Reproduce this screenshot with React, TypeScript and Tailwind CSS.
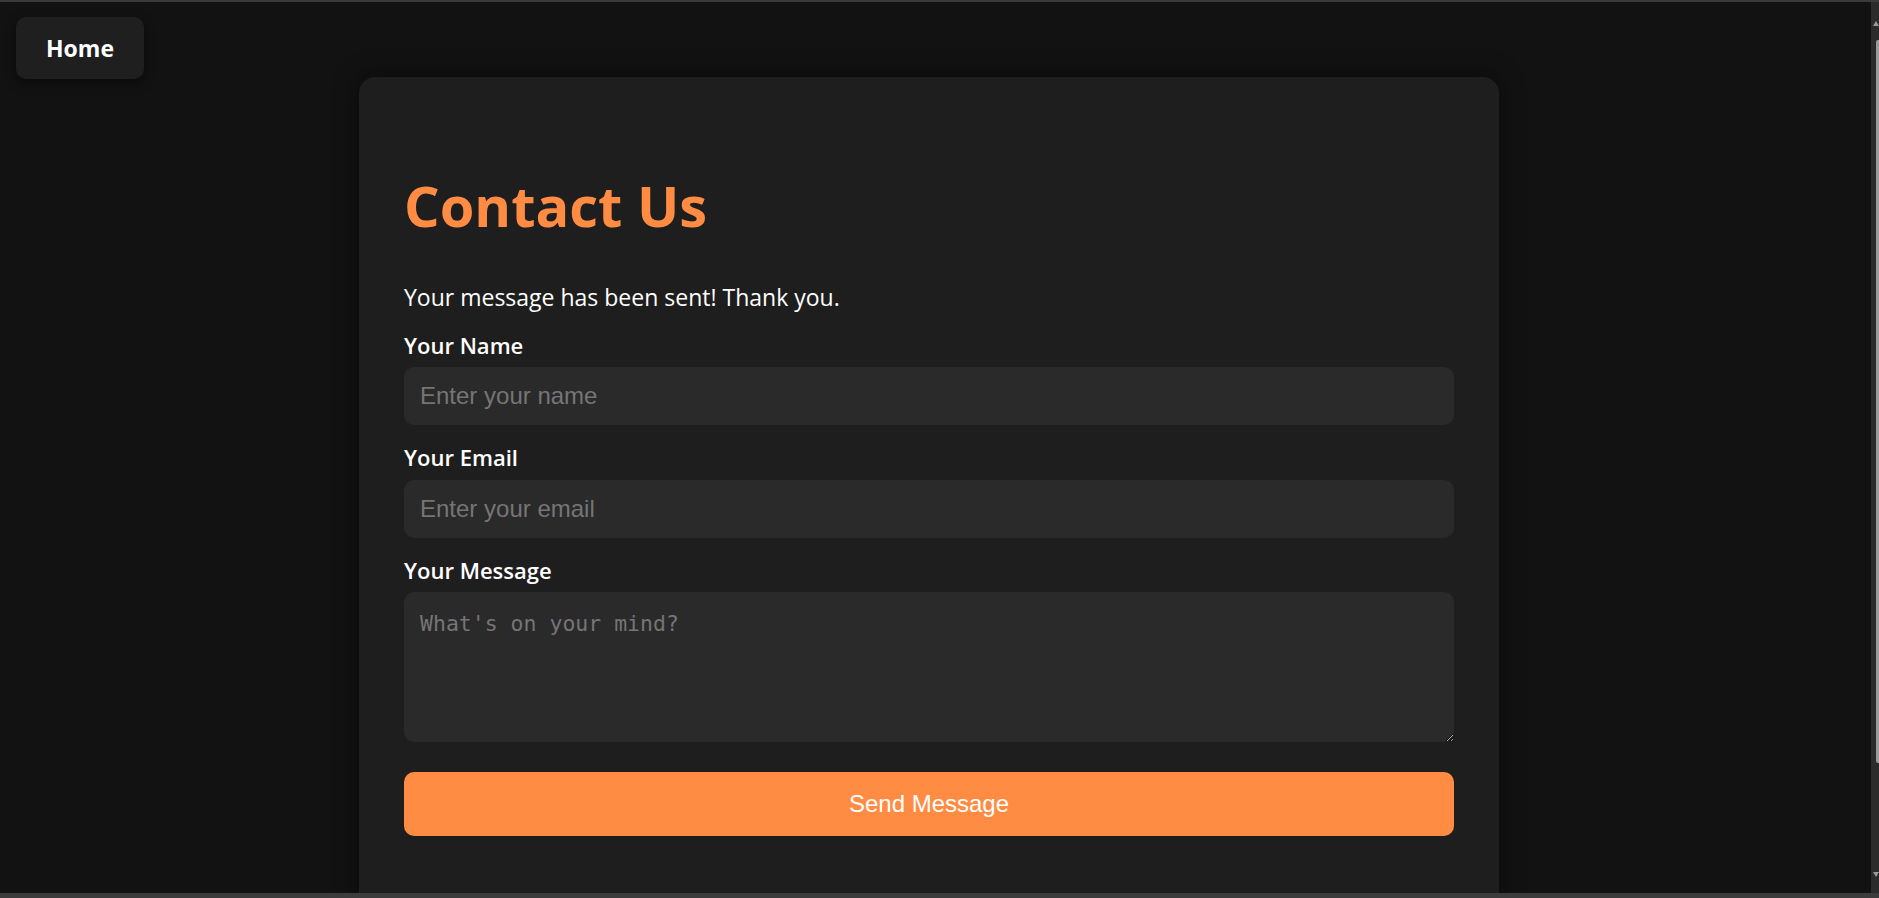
import React from "react";

export default function App() {
  return (
    <div className="w-screen h-screen flex flex-col overflow-hidden bg-[#121212]">
      <div className="h-[2px] shrink-0 bg-[#3a3a3a]" />
      <div className="flex flex-1 min-h-0">
        <div className="relative flex-1 min-w-0 overflow-hidden bg-[#121212]">
          <button className="absolute left-[16px] top-[15px] w-[128px] h-[62px] rounded-[10px] bg-[#1f1f1f] shadow-[0_4px_12px_rgba(0,0,0,0.45)] text-white font-bold text-[23px] [font-family:'Open_Sans',sans-serif] flex items-center justify-center">
            Home
          </button>
          <div className="flex justify-center pr-[13px]">
            <div className="mt-[75px] w-[1140px] min-h-[900px] rounded-t-[16px] bg-[#1e1e1e] shadow-[0_0_24px_rgba(0,0,0,0.5)] pl-[45px] pr-[45px] pt-[100px] flex flex-col [font-family:'Open_Sans',sans-serif]">
              <h1 className="text-[56px] leading-[56px] font-bold text-[#ff8c42]">Contact Us</h1>
              <p className="mt-[53px] text-[23px] leading-[23px] text-white">Your message has been sent! Thank you.</p>
              <label className="mt-[25px] text-[22px] leading-[22px] font-semibold text-white">Your Name</label>
              <input
                className="mt-[11px] h-[58px] w-full rounded-[10px] bg-[#2a2a2a] px-[16px] text-[24px] text-white placeholder:text-[#757575] outline-none [font-family:'Liberation_Sans',Arial,sans-serif]"
                placeholder="Enter your name"
              />
              <label className="mt-[21px] text-[22px] leading-[22px] font-semibold text-white">Your Email</label>
              <input
                className="mt-[12px] h-[58px] w-full rounded-[10px] bg-[#2a2a2a] px-[16px] text-[24px] text-white placeholder:text-[#757575] outline-none [font-family:'Liberation_Sans',Arial,sans-serif]"
                placeholder="Enter your email"
              />
              <label className="mt-[21px] text-[22px] leading-[22px] font-semibold text-white">Your Message</label>
              <textarea
                className="mt-[11px] w-full h-[150px] rounded-[10px] bg-[#2a2a2a] p-[16px] text-[21.5px] text-white placeholder:text-[#757575] outline-none [font-family:'DejaVu_Sans_Mono',monospace]"
                placeholder="What's on your mind?"
              />
              <button className="mt-[30px] w-full h-[64px] rounded-[10px] bg-[#ff8c42] text-white text-[24px] [font-family:'Liberation_Sans',Arial,sans-serif]">
                Send Message
              </button>
            </div>
          </div>
        </div>
        <div className="w-[8px] shrink-0 bg-[#2b2b2b] flex flex-col items-end">
          <div className="mt-[19px] w-0 h-0 border-l-[3px] border-r-[3px] border-b-[5px] border-l-transparent border-r-transparent border-b-[#9a9a9a]" />
          <div className="mt-[14px] w-[3px] flex-1 mb-[109px] rounded-l-[2px] bg-[#9a9a9a]" />
          <div className="mb-[16px] w-0 h-0 border-l-[3px] border-r-[3px] border-t-[5px] border-l-transparent border-r-transparent border-t-[#9a9a9a]" />
        </div>
      </div>
      <div className="h-[5px] shrink-0 bg-[#3c3c3c]" />
    </div>
  );
}
